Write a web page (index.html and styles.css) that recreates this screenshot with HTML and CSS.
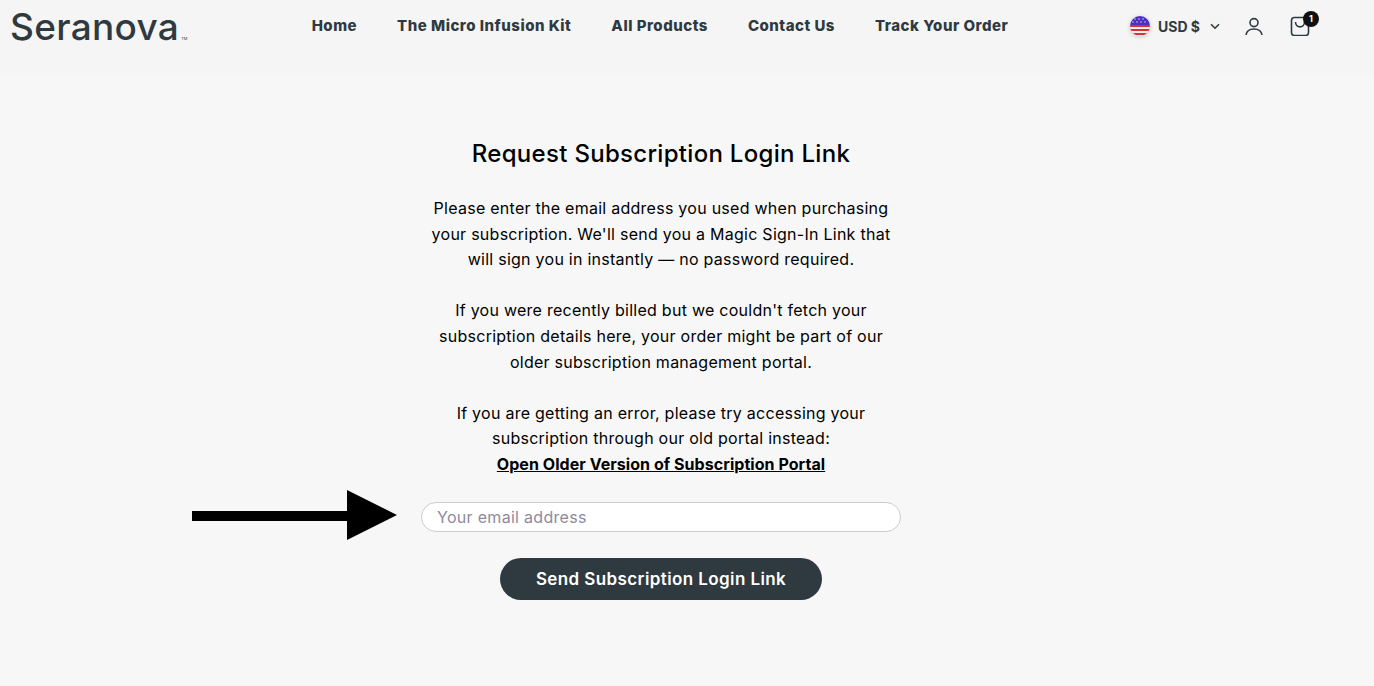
FILE: index.html
```html
<!DOCTYPE html>
<html lang="en">
<head>
<meta charset="utf-8">
<title>Seranova</title>
<link rel="stylesheet" href="styles.css">
</head>
<body>
<header class="site-header">
  <a class="logo" href="#"><span class="logo-word">Seranova</span><span class="logo-tm">TM</span></a>
  <nav class="main-nav">
    <a href="#">Home</a>
    <a href="#">The Micro Infusion Kit</a>
    <a href="#">All Products</a>
    <a href="#">Contact Us</a>
    <a href="#">Track Your Order</a>
  </nav>
  <div class="header-tools">
    <div class="currency">
      <svg class="flag" width="20" height="20" viewBox="0 0 20 20">
        <defs><clipPath id="flagclip"><circle cx="10" cy="10" r="10"/></clipPath></defs>
        <g clip-path="url(#flagclip)">
          <rect width="20" height="20" fill="#f4f0f0"/>
          <rect y="9" width="20" height="2" fill="#d8303a"/>
          <rect y="13" width="20" height="2" fill="#d8303a"/>
          <rect y="17" width="20" height="2" fill="#d8303a"/>
          <rect y="0" width="20" height="9" fill="#4b2fc4"/>
          <g fill="#e6e0f5"><circle cx="5" cy="3" r=".7"/><circle cx="9" cy="3" r=".7"/><circle cx="13" cy="3" r=".7"/><circle cx="3" cy="6" r=".7"/><circle cx="7" cy="6" r=".7"/><circle cx="11" cy="6" r=".7"/><circle cx="15" cy="6" r=".7"/></g>
        </g>
      </svg>
      <span class="currency-code">USD $</span>
      <svg class="chevron" width="10" height="7" viewBox="0 0 10 7" fill="none"><path d="M1 1.2 5 5.2 9 1.2" stroke="#2f3a40" stroke-width="1.6"/></svg>
    </div>
    <svg class="icon-user" width="18" height="19" viewBox="0 0 18 19" fill="none" stroke="#2f3a40" stroke-width="1.6"><circle cx="9" cy="5.6" r="4"/><path d="M1 18c.6-4 3.800-6 8-6s7.400 2 8 6"/></svg>
    <div class="cart">
      <svg width="20" height="20" viewBox="0 0 20 20" fill="none" stroke="#2f3a40" stroke-width="1.6"><rect x="1.500" y="1.500" width="17" height="18" rx="3"/><path d="M5.500 6c0 6.500 9 6.500 9 0"/></svg>
      <span class="cart-count">1</span>
    </div>
  </div>
</header>
<main class="page">
  <section class="login-panel">
    <h1>Request Subscription Login Link</h1>
    <p>Please enter the email address you used when purchasing your subscription. We'll send you a Magic Sign-In Link that will sign you in instantly — no password required.</p>
    <p>If you were recently billed but we couldn't fetch your subscription details here, your order might be part of our older subscription management portal.</p>
    <p>If you are getting an error, please try accessing your subscription through our old portal instead:<br><a class="old-portal" href="#">Open Older Version of Subscription Portal</a></p>
    <div class="field-row">
      <svg class="arrow" width="205" height="50" viewBox="0 0 205 50"><path d="M0 21h155V0l50 25-50 25V31H0z" fill="#000"/></svg>
      <input class="email" type="email" placeholder="Your email address">
    </div>
    <button class="send" type="button">Send Subscription Login Link</button>
  </section>
</main>
</body>
</html>
```
FILE: styles.css
```css
* { box-sizing: border-box; }
html, body { margin: 0; height: 100%; }
body {
  background: #f7f7f7;
  color: #000;
  font-family: "Inter", "Liberation Sans", sans-serif;
  overflow: hidden;
}
.site-header {
  height: 76px;
  background: #f5f5f5;
  display: grid;
  grid-template-columns: 1fr auto 1fr;
  align-items: start;
  padding: 0 64px 0 10px;
}
.logo {
  display: flex;
  align-items: flex-end;
  color: #2f3a40;
  text-decoration: none;
  height: 46px;
  padding-top: 8px;
}
.logo-word {
  font-size: 37px;
  font-weight: 500;
  line-height: 38px;
  letter-spacing: .3px;
}
.logo-tm { font-size: 4px; line-height: 8px; margin-left: 2px; margin-bottom: 3px; }
.main-nav {
  display: flex;
  gap: 40px;
  padding-top: 16px;
}
.main-nav a {
  color: #2f3a40;
  text-decoration: none;
  font-size: 15px;
  font-weight: 800;
  line-height: 20px;
  letter-spacing: .5px;
}
.header-tools {
  display: flex;
  justify-content: flex-end;
  align-items: center;
  height: 52px;
}
.currency { display: flex; align-items: center; }
.flag { margin-right: 8px; filter: drop-shadow(0 1px 2px rgba(0,0,0,.2)); }
.currency-code { color: #2f3a40; font-size: 14px; font-weight: 700; margin-right: 10px; }
.icon-user { margin-left: 25px; }
.cart { position: relative; margin-left: 27px; height: 20px; }
.cart svg { display: block; }
.cart-count {
  position: absolute;
  top: -5px;
  right: -9px;
  width: 16px;
  height: 16px;
  border-radius: 50%;
  background: #111;
  color: #fff;
  font-size: 9px;
  font-weight: 700;
  line-height: 16px;
  text-align: center;
}
.page {
  display: flex;
  justify-content: center;
  padding: 63px 52px 0 0;
}
.login-panel {
  width: 480px;
  display: flex;
  flex-direction: column;
  align-items: center;
  text-align: center;
}
h1 {
  margin: 0 0 27px;
  font-size: 24px;
  font-weight: 500;
  line-height: 30px;
  letter-spacing: .3px;
}
p {
  margin: 0 0 25.600px;
  width: 470px;
  font-size: 16px;
  font-weight: 380;
  line-height: 25.600px;
  letter-spacing: .26px;
}
.old-portal { color: #000; font-weight: 700; letter-spacing: .05px; }
.field-row { position: relative; width: 480px; margin-top: -1px; }
.arrow { position: absolute; left: -229px; top: -12px; }
.email {
  display: block;
  width: 480px;
  height: 30px;
  padding: 0 15px;
  border: 1px solid #ccc;
  border-radius: 15px;
  background: #fff;
  font: 380 16px "Inter", sans-serif;
  letter-spacing: .3px;
}
.email::placeholder { color: #8d8a9c; opacity: 1; }
.send {
  margin-top: 26px;
  width: 322px;
  height: 42px;
  border: 0;
  border-radius: 21px;
  background: #2f3a40;
  color: #fff;
  font: 600 17px "Inter", sans-serif;
  letter-spacing: .4px;
}
```
